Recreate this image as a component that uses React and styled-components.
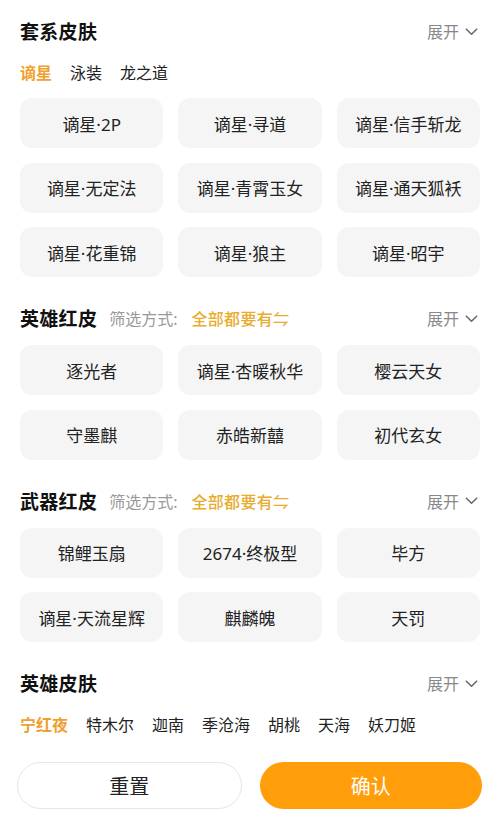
import React from 'react';
import styled, {createGlobalStyle} from 'styled-components';

const GlobalStyle = createGlobalStyle`
  html, body {
    margin: 0;
    padding: 0;
    background: #fff;
  }
  body {
    font-family: "Noto Sans", "Noto Sans CJK SC", sans-serif;
    color: #222;
  }
`;

const sections = [
    {
        title: '套系皮肤',
        tabs: ['谪星', '泳装', '龙之道'],
        items: ['谪星·2P', '谪星·寻道', '谪星·信手斩龙', '谪星·无定法', '谪星·青霄玉女', '谪星·通天狐袄', '谪星·花重锦', '谪星·狼主', '谪星·昭宇'],
    },
    {
        title: '英雄红皮',
        filter: true,
        items: ['逐光者', '谪星·杏暖秋华', '樱云天女', '守墨麒', '赤皓新囍', '初代玄女'],
    },
    {
        title: '武器红皮',
        filter: true,
        items: ['锦鲤玉扇', '2674·终极型', '毕方', '谪星·天流星辉', '麒麟魄', '天罚'],
    },
    {
        title: '英雄皮肤',
        tabs: ['宁红夜', '特木尔', '迦南', '季沧海', '胡桃', '天海', '妖刀姬'],
    },
];

const Chevron = () => (
    <svg width="15" height="15" viewBox="0 0 16 16" fill="none">
        <path d="M2.5 5.5 L8 11 L13.5 5.5" stroke="#666" strokeWidth="1.6" strokeLinecap="round" strokeLinejoin="round"/>
    </svg>
);

const App = () => {
    return (
        <Page>
            <GlobalStyle/>
            {sections.map(section => (
                <Section key={section.title}>
                    <Header>
                        <Title>{section.title}</Title>
                        {section.filter && (
                            <Filter>
                                <FilterLabel>筛选方式:</FilterLabel>
                                <FilterValue>全部都要有⇋</FilterValue>
                            </Filter>
                        )}
                        <Expand>展开 <Chevron/></Expand>
                    </Header>
                    {section.tabs && (
                        <Tabs>
                            {section.tabs.map((tab, i) => (
                                <Tab key={tab} active={i === 0}>{tab}</Tab>
                            ))}
                        </Tabs>
                    )}
                    {section.items && (
                        <Grid>
                            {section.items.map(item => (
                                <Cell key={item}>{item}</Cell>
                            ))}
                        </Grid>
                    )}
                </Section>
            ))}
            <Footer>
                <ResetButton>重置</ResetButton>
                <ConfirmButton>确认</ConfirmButton>
            </Footer>
        </Page>
    );
};

const Page = styled.div`
  width: 500px;
  height: 829px;
  padding-top: 9px;
  box-sizing: border-box;
  overflow: hidden;
  background: #fff;
`;

const Section = styled.section`
  padding: 0 20px;
  margin-bottom: 19px;
  &:last-of-type {
    margin-bottom: 0;
  }
`;

const Header = styled.div`
  display: flex;
  align-items: center;
  height: 44px;
  margin-bottom: 5px;
`;

const Title = styled.h3`
  margin: 0;
  font-size: 19px;
  font-weight: 700;
  color: #111;
  letter-spacing: 0.3px;
`;

const Filter = styled.div`
  display: flex;
  align-items: center;
  margin-left: 12px;
  font-size: 16px;
`;

const FilterLabel = styled.span`
  color: #999;
  margin-right: 14px;
`;

const FilterValue = styled.span`
  color: #e8ac2e;
  font-weight: 500;
  letter-spacing: 0.3px;
`;

const Expand = styled.div`
  margin-left: auto;
  display: flex;
  align-items: center;
  gap: 5px;
  font-size: 16px;
  color: #888;
  padding-right: 1px;
`;

const Tabs = styled.div`
  display: flex;
  align-items: center;
  gap: 18px;
  height: 38px;
  margin-top: -5px;
  margin-bottom: 7px;
`;

const Tab = styled.span`
  font-size: 16px;
  font-weight: ${props => (props.active ? 700 : 400)};
  color: ${props => (props.active ? '#f0a030' : '#222')};
`;

const Grid = styled.div`
  display: grid;
  grid-template-columns: repeat(3, 1fr);
  column-gap: 15px;
  row-gap: 14.5px;
`;

const Cell = styled.div`
  height: 50px;
  display: flex;
  align-items: center;
  justify-content: center;
  background: #f5f5f5;
  border-radius: 12px;
  font-size: 17px;
  color: #222;
  white-space: nowrap;
`;

const Footer = styled.div`
  display: flex;
  gap: 18px;
  padding: 0 18px 0 17px;
  margin-top: 19px;
`;

const ResetButton = styled.button`
  flex: 1;
  height: 47px;
  border: 1px solid #e6e6e6;
  border-radius: 24px;
  background: #fff;
  font-family: inherit;
  font-size: 20px;
  color: #222;
`;

const ConfirmButton = styled.button`
  flex: 1;
  height: 47px;
  border: none;
  border-radius: 24px;
  background: #ff9d0b;
  font-family: inherit;
  font-size: 20px;
  color: #fff;
`;

export default App;
